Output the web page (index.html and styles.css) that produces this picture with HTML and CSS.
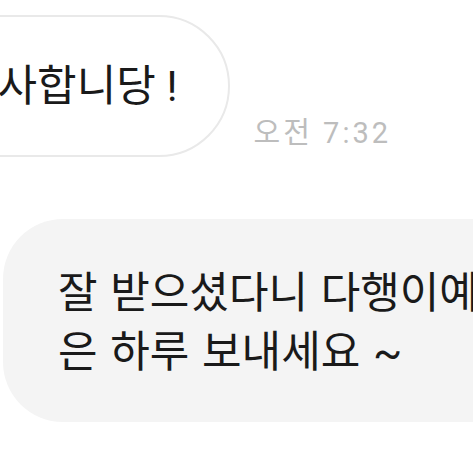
FILE: index.html
```html
<!DOCTYPE html>
<html lang="ko">
<head>
  <meta charset="UTF-8" />
  <meta name="viewport" content="width=device-width, initial-scale=1.0" />
  <title>대화</title>
  <link rel="stylesheet" href="styles.css">
</head>
<body>
  <div class="chat">
    <div class="row incoming">
      <div class="bubble bubble-in">감사합니당 !</div>
      <div class="time">오전 7:32</div>
    </div>
    <div class="row outgoing">
      <div class="bubble bubble-out">잘 받으셨다니 다행이예요 좋<br>은 하루 보내세요 ~</div>
    </div>
  </div>
</body>
</html>
```

FILE: styles.css
```css
body {
  margin: 0;
  background: #fff;
  font-family: Roboto, "Noto Sans CJK KR", sans-serif;
  color: #1a1a1a;
  overflow: hidden;
}
.chat {
  display: flex;
  flex-direction: column;
  gap: 62px;
  padding-top: 15px;
}
.row {
  display: flex;
  align-items: flex-end;
}
.incoming {
  gap: 24px;
  margin-left: -99px;
}
.bubble {
  font-size: 43px;
  line-height: 59px;
  white-space: nowrap;
}
.bubble-in {
  border: 2px solid #e9e9e9;
  border-radius: 71px;
  padding: 40px 50px 39px 55px;
}
.time {
  font-size: 29px;
  line-height: 29px;
  letter-spacing: 3px;
  color: #bdbdbd;
  padding-bottom: 9px;
}
.outgoing {
  margin-left: 3px;
}
.bubble-out {
  background: #f4f4f4;
  border-radius: 60px;
  padding: 45px 0 40px 55px;
  min-width: 600px;
}
.bubble-out {
  word-spacing: 2px;
}
```
